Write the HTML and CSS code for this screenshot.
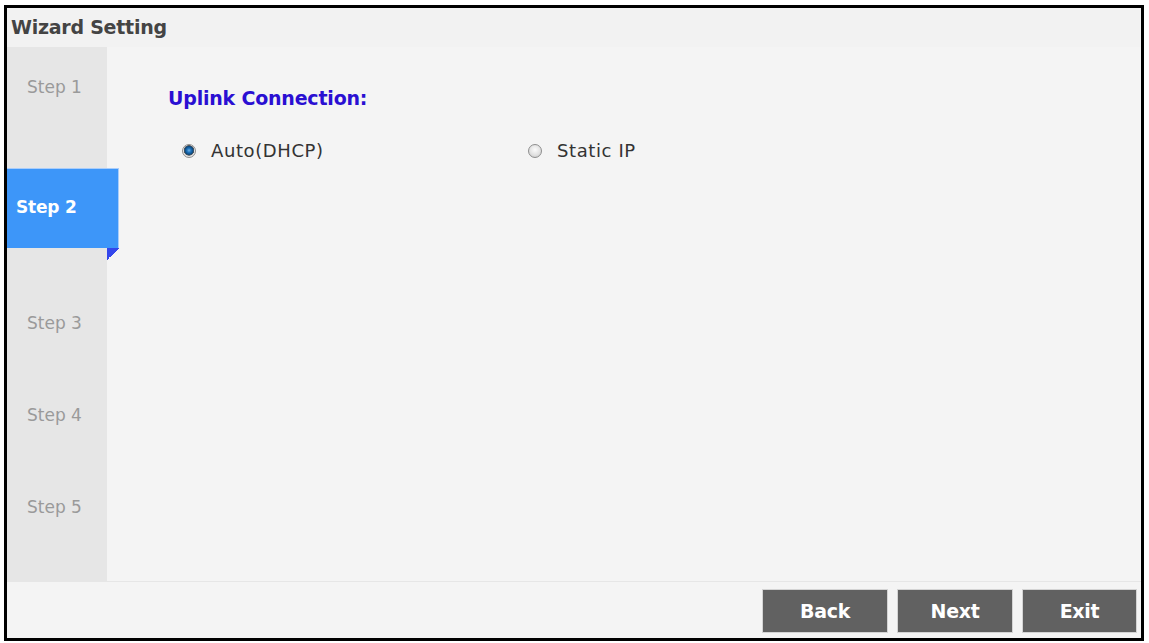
FILE: index.html
```html
<!DOCTYPE html>
<html>
<head>
<meta charset="utf-8">
<link rel="stylesheet" href="styles.css">
</head>
<body>
<div class="wizard">
  <div class="header">Wizard Setting</div>
  <div class="main">
    <div class="sidebar">
      <div class="step step-first">Step 1</div>
      <div class="step step-active">Step 2</div>
      <div class="fold"></div>
      <div class="step step-rest">Step 3</div>
      <div class="step step-rest">Step 4</div>
      <div class="step step-rest">Step 5</div>
    </div>
    <div class="content">
      <div class="title">Uplink Connection:</div>
      <div class="options">
        <label class="option opt-auto"><span class="radio checked"></span><span class="opt-text">Auto(DHCP)</span></label>
        <label class="option"><span class="radio"></span><span class="opt-text">Static IP</span></label>
      </div>
    </div>
  </div>
  <div class="footer">
    <button class="btn btn-back">Back</button>
    <button class="btn btn-next">Next</button>
    <button class="btn btn-exit">Exit</button>
  </div>
</div>
</body>
</html>
```

FILE: styles.css
```css
* { box-sizing: border-box; }
html, body { margin: 0; padding: 0; background: #ffffff; }
body { font-family: "DejaVu Sans", "Liberation Sans", sans-serif; }

.wizard {
  margin: 5px 0 0 4px;
  width: 1140px;
  height: 636px;
  border: 3px solid #000;
  background: #f4f4f4;
  display: flex;
  flex-direction: column;
}

.header {
  height: 39px;
  background: #f2f2f2;
  color: #444444;
  font-weight: bold;
  font-size: 19px;
  line-height: 39px;
  padding-left: 4px;
  letter-spacing: -0.25px;
}

.main {
  height: 535px;
  display: flex;
  border-bottom: 1px solid #e6e6e6;
}

.sidebar {
  width: 100px;
  background: #e6e6e6;
  display: flex;
  flex-direction: column;
}

.step {
  color: #9a9a9a;
  font-size: 17px;
  padding-left: 20px;
  letter-spacing: 0;
}

.step-first {
  height: 121px;
  padding-top: 30px;
}

.step-active {
  width: 112px;
  height: 80px;
  background: #3d96f9;
  border-top: 1px solid #a9cdfb;
  border-right: 1px solid #a9cdfb;
  color: #ffffff;
  font-weight: bold;
  padding-left: 9px;
  display: flex;
  align-items: center;
  padding-bottom: 4px;
  letter-spacing: -0.2px;
}

.fold {
  width: 12px;
  height: 12px;
  margin-left: 100px;
  background: linear-gradient(to bottom right, #3346ec 50%, transparent 50%);
}

.step-rest {
  height: 92px;
  display: flex;
  align-items: center;
}
.fold + .step-rest { margin-top: 17px; }

.content {
  flex: 1;
  padding: 41px 0 0 61px;
}

.title {
  color: #2a0fd2;
  font-weight: bold;
  font-size: 19px;
  letter-spacing: -0.2px;
  line-height: 20px;
}

.options {
  display: flex;
  margin-top: 33px;
  padding-left: 14px;
}

.option {
  display: flex;
  align-items: center;
  color: #333333;
  font-size: 18px;
  letter-spacing: 0.6px;
}
.opt-auto { width: 346px; }

.radio {
  width: 14px;
  height: 14px;
  border-radius: 50%;
  border: 1px solid #8e8e8e;
  background: radial-gradient(circle at 50% 40%, #fbfbfb 0%, #e2e2e2 55%, #c4c4c4 100%);
  margin-right: 15px;
}
.radio.checked {
  background: radial-gradient(circle at 50% 45%, #6fb4e8 0, #1f74bd 2px, #0c4a80 4px, #5a5a5a 5px, #e8e8e8 5.5px, #c8c8c8 100%);
}

.opt-text { line-height: 20px; }

.footer {
  flex: 1;
  display: flex;
  justify-content: flex-end;
  align-items: flex-start;
  gap: 9px;
  padding: 7px 4px 0 0;
}

.btn {
  height: 44px;
  background: #616161;
  border: 1px solid #d4d4d4;
  color: #ffffff;
  font-family: "DejaVu Sans", "Liberation Sans", sans-serif;
  font-weight: bold;
  font-size: 19px;
  letter-spacing: -0.3px;
  padding: 0;
}
.btn-back { width: 126px; }
.btn-next { width: 116px; }
.btn-exit { width: 115px; }
```
